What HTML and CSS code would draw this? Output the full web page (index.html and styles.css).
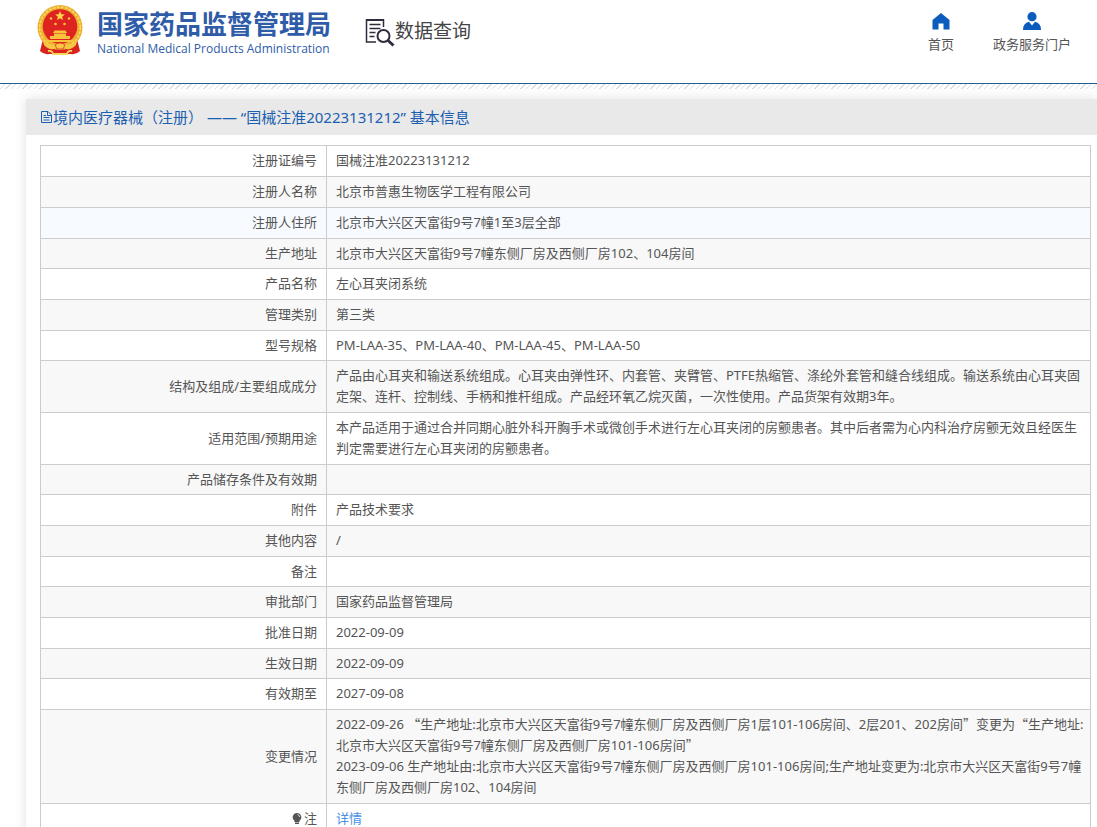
FILE: index.html
```html
<!DOCTYPE html>
<html lang="zh-CN">
<head>
<meta charset="utf-8">
<meta name="viewport" content="width=device-width, initial-scale=1">
<title>国家药品监督管理局 数据查询</title>
<link rel="stylesheet" href="styles.css">
</head>
<body>
<header class="header">
  <div class="brand">
    <svg class="emblem" viewBox="0 0 48 52" aria-hidden="true">
      <path d="M7 35 4 47q4 4 9 3h22q5 1 9-3l-3-12z" fill="#d8231f"/>
      <circle cx="24" cy="23.500" r="22.500" fill="#eeb02f"/>
      <circle cx="24" cy="23.500" r="20.300" fill="none" stroke="#f8dc6a" stroke-width="1.600" stroke-dasharray="2.500 1.500"/>
      <circle cx="24" cy="22.500" r="17.300" fill="#dd2420"/>
      <path d="m24 7 1.300 3.300 3.500.2-2.700 2.200.9 3.400-3-1.900-3 1.900.9-3.400-2.700-2.200 3.500-.2z" fill="#ffd84a"/>
      <g fill="#f9c33c"><circle cx="15" cy="14.500" r="1.300"/><circle cx="33" cy="14.500" r="1.300"/><circle cx="19.500" cy="20" r="1.300"/><circle cx="28.500" cy="20" r="1.300"/>
      <path d="M17 29l1.500-2.500h11L31 29zM18 29.500h12v2.500H18zM14 32h20v3H14zM10 36h28v2H10z"/></g>
      <path d="M7 35q5 9 17 4 12 5 17-4l-1 6q-4 5-10 4l-6-3-6 3q-6 1-10-4z" fill="#f6c745"/>
      <path d="M19 41q5-4 10 0l-2 4h-6z" fill="#f6c745" stroke="#d8231f" stroke-width=".7"/>
      <path d="M12 47q5-1 5 4M36 47q-5-1-5 4M17 50h14" fill="none" stroke="#f8d65e" stroke-width="1.800"/>
    </svg>
    <div class="brand-text">
      <span class="brand-cn">国家药品监督管理局</span>
      <span class="brand-en">National Medical Products Administration</span>
    </div>
  </div>
  <div class="section">
    <svg class="section-icon" viewBox="0 0 30 30" aria-hidden="true" fill="none" stroke="#2d2d3d">
      <path d="M18.500 9V2H1.500v22H11" stroke-width="1.500"/><path d="M1 2h18" stroke-width="2"/>
      <path d="M4.500 6.500h11M4.500 10.500h11M4.500 14.500h6M4.500 18.500h5" stroke-width="1.500"/>
      <circle cx="18.500" cy="18" r="6" stroke-width="2"/><path d="m23 22.500 5.500 5" stroke-width="3"/>
    </svg>
    <span>数据查询</span>
  </div>
  <nav class="nav">
    <a href="#">
      <svg viewBox="0 0 20 20" aria-hidden="true"><path d="M10 2 1.500 9V18.500h6V12.500h5v6h6V9z"/></svg>
      首页
    </a>
    <a href="#">
      <svg viewBox="0 0 20 20" aria-hidden="true"><circle cx="10" cy="5.700" r="4.600"/><path d="M1 19q0-7 6-8.200l3 3.700 3-3.700q6 1.200 6 8.200z"/></svg>
      政务服务门户
    </a>
  </nav>
</header>
<div class="stripes"></div>
<main class="card">
  <h1 class="card-title">
    <svg viewBox="0 0 13 14" aria-hidden="true" fill="none" stroke="#1c5fb0"><path d="M1.500 1.500h6.500l3.500 3.500v7.500h-10zM7.500 1.500v4h4M3.500 5.500h2.500M3.500 7.500h6M3.500 10h6"/></svg>
    <span>境内医疗器械（注册） —— “国械注准20223131212” 基本信息</span>
  </h1>
  <div class="card-body">
    <table class="info">
      <tbody>
        <tr><th scope="row">注册证编号</th><td>国械注准20223131212</td></tr>
        <tr><th scope="row">注册人名称</th><td>北京市普惠生物医学工程有限公司</td></tr>
        <tr class="active"><th scope="row">注册人住所</th><td>北京市大兴区天富街9号7幢1至3层全部</td></tr>
        <tr><th scope="row">生产地址</th><td>北京市大兴区天富街9号7幢东侧厂房及西侧厂房102、104房间</td></tr>
        <tr><th scope="row">产品名称</th><td>左心耳夹闭系统</td></tr>
        <tr><th scope="row">管理类别</th><td>第三类</td></tr>
        <tr><th scope="row">型号规格</th><td>PM-LAA-35、PM-LAA-40、PM-LAA-45、PM-LAA-50</td></tr>
        <tr><th scope="row">结构及组成/主要组成成分</th><td>产品由心耳夹和输送系统组成。心耳夹由弹性环、内套管、夹臂管、PTFE热缩管、涤纶外套管和缝合线组成。输送系统由心耳夹固定架、连杆、控制线、手柄和推杆组成。产品经环氧乙烷灭菌，一次性使用。产品货架有效期3年。</td></tr>
        <tr><th scope="row">适用范围/预期用途</th><td>本产品适用于通过合并同期心脏外科开胸手术或微创手术进行左心耳夹闭的房颤患者。其中后者需为心内科治疗房颤无效且经医生判定需要进行左心耳夹闭的房颤患者。</td></tr>
        <tr><th scope="row">产品储存条件及有效期</th><td></td></tr>
        <tr><th scope="row">附件</th><td>产品技术要求</td></tr>
        <tr><th scope="row">其他内容</th><td>/</td></tr>
        <tr><th scope="row">备注</th><td></td></tr>
        <tr><th scope="row">审批部门</th><td>国家药品监督管理局</td></tr>
        <tr><th scope="row">批准日期</th><td>2022-09-09</td></tr>
        <tr><th scope="row">生效日期</th><td>2022-09-09</td></tr>
        <tr><th scope="row">有效期至</th><td>2027-09-08</td></tr>
        <tr><th scope="row">变更情况</th><td>2022-09-26 <span class="quote">“</span>生产地址:北京市大兴区天富街9号7幢东侧厂房及西侧厂房1层101-106房间、2层201、202房间<span class="quote">”</span>变更为<span class="quote">“</span>生产地址:北京市大兴区天富街9号7幢东侧厂房及西侧厂房101-106房间<span class="quote">”</span><br>2023-09-06 生产地址由:北京市大兴区天富街9号7幢东侧厂房及西侧厂房101-106房间;生产地址变更为:北京市大兴区天富街9号7幢东侧厂房及西侧厂房102、104房间</td></tr>
        <tr><th scope="row"><svg class="bulb" viewBox="0 0 10 13" aria-hidden="true"><path d="M5 1a4.300 4.300 0 0 0-2.500 7.800V10h5V8.800A4.300 4.300 0 0 0 5 1zM3 10.500h4V12H3z" fill="#555"/><path d="M5.500 2.500q2 .5 2.200 2.500" fill="none" stroke="#ddd"/></svg>注</th><td><a class="detail" href="#">详情</a></td></tr>
      </tbody>
    </table>
  </div>
</main>
</body>
</html>
```
FILE: styles.css
```css
* {
  box-sizing: border-box;
}

body {
  margin: 0;
  background: #fff;
  color: #555;
  font: 13px/21px "Noto Sans", "Noto Sans CJK SC", sans-serif;
}

a {
  color: inherit;
  text-decoration: none;
}

.header {
  display: flex;
  align-items: flex-start;
  height: 84px;
  padding: 4px 26px 0 36px;
  border-bottom: 1px solid #1b6098;
}

.brand {
  display: flex;
  gap: 13px;
}

.emblem {
  width: 48px;
  height: 52px;
}

.brand-text {
  display: flex;
  flex-direction: column;
  padding-top: 5px;
  color: #2f5ca8;
  white-space: nowrap;
}

.brand-cn {
  font-size: 26px;
  line-height: 30px;
  font-weight: 700;
}

.brand-en {
  font: 500 12px/20px "Open Sans", sans-serif;
}

.section {
  display: flex;
  align-items: flex-start;
  margin-left: 34px;
  padding-top: 14px;
  color: #444;
  font-size: 19px;
  line-height: 26px;
  white-space: nowrap;
}

.section-icon {
  width: 30px;
  height: 30px;
}

.nav {
  display: flex;
  gap: 39px;
  margin-left: auto;
  padding-top: 7px;
}

.nav a {
  display: flex;
  flex-direction: column;
  align-items: center;
  gap: 3px;
  white-space: nowrap;
}

.nav svg {
  width: 20px;
  height: 20px;
  fill: #0b5cbc;
}

.stripes {
  height: 5px;
  background: repeating-linear-gradient(135deg, #fff 0 3px, #ddd 3px 4px);
}

.card {
  margin: 10px 0 0 26px;
  background: #fff;
  box-shadow: 0 0 12px rgba(0, 0, 0, 0.12);
}

.card-title {
  display: flex;
  align-items: center;
  height: 36px;
  margin: 0;
  padding: 0 14px;
  background: #e9e9e9;
  color: #1c5fb0;
  font-size: 15px;
  font-weight: 400;
}

.card-title svg {
  width: 13px;
  height: 14px;
}

.card-body {
  padding: 10px 6px 16px 14px;
}

.info {
  width: 100%;
  table-layout: fixed;
  border-collapse: collapse;
}

.info th,
.info td {
  height: 31px;
  padding: 4px 6px 5px 9px;
  border: 1px solid #ccc;
  font-weight: 400;
  text-align: left;
}

.info th {
  width: 286px;
  padding-right: 9px;
  text-align: right;
}

.info tr:nth-child(3n + 4) > * {
  height: 30px;
  padding-bottom: 4px;
}

.info tr:nth-child(even) {
  background: #f8f8f8;
}

.info .active {
  background: #f7fafe;
}

.quote {
  font-family: "Noto Sans CJK SC", sans-serif;
  line-height: 1;
}

.bulb {
  width: 10px;
  height: 13px;
  margin-right: 2px;
  vertical-align: -2px;
}

.detail {
  color: #4a90e2;
}
```
